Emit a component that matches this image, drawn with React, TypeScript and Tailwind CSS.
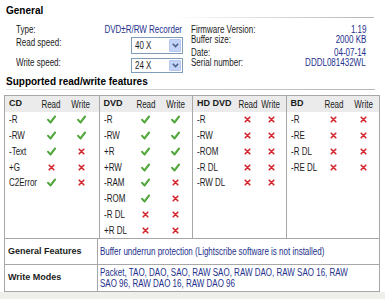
import React from "react";

const T = ({
  children,
  o = "left",
  className = "",
}: {
  children: React.ReactNode;
  o?: "left" | "right" | "center";
  className?: string;
}) => (
  <span
    className={`inline-block whitespace-nowrap scale-x-[0.8] ${
      o === "left" ? "origin-left" : o === "right" ? "origin-right" : "origin-center"
    } ${className}`}
  >
    {children}
  </span>
);

const Check = () => (
  <svg width="9" height="9" viewBox="0 0 10 10" className="block">
    <path d="M1.3 5.4 L3.9 8.2 L8.8 1.8" fill="none" stroke="#3e9a2c" strokeWidth="2.3" strokeLinecap="round" strokeLinejoin="round" />
    <path d="M1.6 5.2 L3.9 7.4 L8.4 1.9" fill="none" stroke="#7cc65a" strokeWidth="0.8" strokeLinecap="round" strokeLinejoin="round" />
  </svg>
);

const Cross = () => (
  <svg width="7" height="7" viewBox="0 0 8 8" className="block">
    <path d="M1.4 1.4 L6.6 6.6 M6.6 1.4 L1.4 6.6" fill="none" stroke="#d4262e" strokeWidth="1.9" strokeLinecap="round" />
  </svg>
);

type Row = [string, boolean, boolean];

const cols: { name: string; grid: string; rows: Row[] }[] = [
  {
    name: "CD",
    grid: "grid-cols-[27px_30px_30px]",
    rows: [
      ["-R", true, true],
      ["-RW", true, true],
      ["-Text", true, false],
      ["+G", false, false],
      ["C2Error", true, false],
    ],
  },
  {
    name: "DVD",
    grid: "grid-cols-[27px_30px_30px]",
    rows: [
      ["-R", true, true],
      ["-RW", true, true],
      ["+R", true, true],
      ["+RW", true, true],
      ["-RAM", true, false],
      ["-ROM", true, false],
      ["-R DL", false, false],
      ["+R DL", false, false],
    ],
  },
  {
    name: "HD DVD",
    grid: "grid-cols-[39px_22px_26px]",
    rows: [
      ["-R", false, false],
      ["-RW", false, false],
      ["-ROM", false, false],
      ["-R DL", false, false],
      ["-RW DL", false, false],
    ],
  },
  {
    name: "BD",
    grid: "grid-cols-[28px_30px_30px]",
    rows: [
      ["-R", false, false],
      ["-RE", false, false],
      ["-R DL", false, false],
      ["-RE DL", false, false],
    ],
  },
];

const boldFont = { fontFamily: '"Liberation Sans", Arial, sans-serif' };

const Select = ({ value, h }: { value: string; h: string }) => (
  <div className={`w-[52px] ${h} border border-[#7f9db9] bg-white flex items-center justify-between pl-[3px] pr-[1px]`}>
    <T className="leading-[10px]">{value}</T>
    <div className="w-[12px] h-[calc(100%-2px)] rounded-[1px] bg-[#c4d4f8] border border-[#b6c8f0] flex items-center justify-center">
      <svg width="7" height="5" viewBox="0 0 7 5">
        <path d="M0.8 0.8 L3.5 3.6 L6.2 0.8" fill="none" stroke="#4c5f8c" strokeWidth="1.5" />
      </svg>
    </div>
  </div>
);

export default function App() {
  return (
    <div
      className="w-[385px] h-[299px] bg-white overflow-hidden text-[10px] text-[#1b1b1b]"
      style={{ fontFamily: '"Liberation Sans", Arial, sans-serif' }}
    >
      {/* General header */}
      <div className="pt-[5px] pl-[6px] h-[17px] leading-[12px] font-bold text-[10px] text-black" style={boldFont}>
        General
      </div>
      <div className="ml-[6px] mr-[11px] h-px bg-[linear-gradient(to_right,#ffffff_45%,#b4b4b4)]" />

      {/* Info area */}
      <div className="h-[57px] flex">
        <div className="w-[191px] pl-[16px] pr-[8px]">
          <div className="mt-[5px] h-[13px] leading-[13px] flex justify-between">
            <T>Type:</T>
            <T o="right" className="text-[#23308c] mr-px">DVD±R/RW Recorder</T>
          </div>
          <div className="mt-[1px] h-[20px] flex justify-between items-start">
            <T className="leading-[10px] mt-[1px]">Read speed:</T>
            <Select value="40 X" h="h-[17px]" />
          </div>
          <div className="mt-[1px] h-[16px] flex justify-between items-start">
            <T className="leading-[10px]">Write speed:</T>
            <Select value="24 X" h="h-[15px]" />
          </div>
        </div>
        <div className="w-[175px] pt-[7px]">
          <div className="leading-[10px] flex justify-between">
            <T>Firmware Version:</T>
            <T o="right" className="text-[#23308c]">1.19</T>
          </div>
          <div className="leading-[10px] flex justify-between">
            <T>Buffer size:</T>
            <T o="right" className="text-[#23308c]">2000 KB</T>
          </div>
          <div className="mt-[3px] leading-[10px] flex justify-between">
            <T>Date:</T>
            <T o="right" className="text-[#23308c]">04-07-14</T>
          </div>
          <div className="leading-[10px] flex justify-between">
            <T>Serial number:</T>
            <T o="right" className="text-[#23308c]">DDDL081432WL</T>
          </div>
        </div>
      </div>

      {/* Supported header */}
      <div className="pl-[6px] h-[14px] leading-[13px] font-bold text-[10px] text-black" style={boldFont}>
        Supported read/write features
      </div>
      <div className="ml-[6px] mr-[10px] h-px bg-[linear-gradient(to_right,#e4e4e4,#b4b4b4)]" />

      {/* Table */}
      <div className="mt-[5px] ml-[4px] w-[376px] border border-[#a7a7a7]">
        <div className="grid grid-cols-4 h-[142px]">
          {cols.map((c, i) => (
            <div key={c.name} className={`min-w-0 ${i > 0 ? "border-l border-[#a7a7a7]" : ""}`}>
              <div className={`grid ${c.grid} h-[16px] bg-[#ebebeb] items-center pl-[4px]`}>
                <span className="font-bold text-[9px] whitespace-nowrap" style={boldFont}>{c.name}</span>
                <span className="text-center"><T o="center">Read</T></span>
                <span className="text-center"><T o="center">Write</T></span>
              </div>
              {c.rows.map(([label, r, w]) => (
                <div key={label} className={`grid ${c.grid} h-[15.75px] items-center pl-[4px]`}>
                  <T>{label}</T>
                  <span className="flex justify-center">{r ? <Check /> : <Cross />}</span>
                  <span className="flex justify-center">{w ? <Check /> : <Cross />}</span>
                </div>
              ))}
            </div>
          ))}
        </div>
        <div className="grid grid-cols-[92px_1fr] border-t border-[#a7a7a7] h-[26px]">
          <div className="flex items-center pl-[3px] font-bold text-[9px]" style={boldFont}>General Features</div>
          <div className="border-l border-[#a7a7a7] flex items-center pl-[2px] text-[#23308c]">
            <T>Buffer underrun protection (Lightscribe software is not installed)</T>
          </div>
        </div>
        <div className="grid grid-cols-[92px_1fr] border-t border-[#a7a7a7] h-[27px]">
          <div className="flex items-center pl-[3px] font-bold text-[9px]" style={boldFont}>Write Modes</div>
          <div className="border-l border-[#a7a7a7] flex flex-col justify-center pl-[2px] text-[#23308c] leading-[11px]">
            <T>Packet, TAO, DAO, SAO, RAW SAO, RAW DAO, RAW SAO 16, RAW</T>
            <T>SAO 96, RAW DAO 16, RAW DAO 96</T>
          </div>
        </div>
      </div>
      <div className="h-[10px] bg-[#efefeb]" />
    </div>
  );
}
